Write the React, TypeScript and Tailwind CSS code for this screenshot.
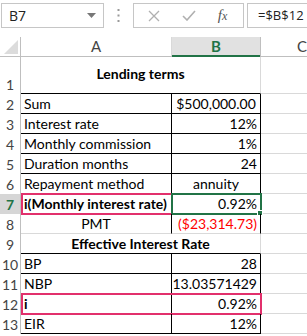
import React from "react";

const GRID = "border-[#d9d9d9]";

type Row = {
  n: number;
  a?: React.ReactNode;
  b?: React.ReactNode;
  kind: "title" | "boxed" | "pmt" | "active";
  h?: string;
  pink?: boolean;
  aBold?: boolean;
  bAlign?: "right" | "center";
  bRed?: boolean;
};

const rows: Row[] = [
  { n: 1, a: "Lending terms", kind: "title", h: "h-[37px]" },
  { n: 2, a: "Sum", b: "$500,000.00", kind: "boxed", bAlign: "center" },
  { n: 3, a: "Interest rate", b: "12%", kind: "boxed" },
  { n: 4, a: "Monthly commission", b: "1%", kind: "boxed" },
  { n: 5, a: "Duration months", b: "24", kind: "boxed" },
  { n: 6, a: "Repayment method", b: "annuity", kind: "boxed", bAlign: "center" },
  { n: 7, a: "i(Monthly interest rate)", b: "0.92%", kind: "active", aBold: true, pink: true },
  { n: 8, a: "PMT", b: "($23,314.73)", kind: "pmt", bRed: true },
  { n: 9, a: "Effective Interest Rate", kind: "title" },
  { n: 10, a: "BP", b: "28", kind: "boxed" },
  { n: 11, a: "NBP", b: "13.03571429", kind: "boxed" },
  { n: 12, a: "i", b: "0.92%", kind: "boxed", aBold: true, pink: true },
  { n: 13, a: "EIR", b: "12%", kind: "boxed" },
];

function SheetRow({ r }: { r: Row }) {
  const h = r.h ?? "h-[20px]";
  const active = r.n === 7;
  return (
    <div className={`flex ${h}`}>
      <div
        className={`w-[21px] shrink-0 border-r border-[#bfbfbf] flex items-end justify-center pb-[1px] text-[14px] leading-[17px] ${
          active ? "bg-[#d6d6d6] text-[#217346] font-bold" : "text-[#444] bg-white"
        }`}
      >
        {r.n}
      </div>
      <div className="relative flex w-[240px] shrink-0">
        {r.kind === "title" ? (
          <div
            className={`w-[240px] border-r ${GRID} border-b ${
              r.n === 1 ? "border-b-black items-center pb-[3px]" : "border-b-black items-end pb-[1px]"
            } flex justify-center font-bold text-[14px] leading-[17px] text-black`}
          >
            {r.a}
          </div>
        ) : (
          <>
            <div
              className={`w-[151px] border-r border-b flex items-end pb-[1px] text-[14px] leading-[17px] text-black whitespace-nowrap ${
                r.kind === "pmt"
                  ? `border-r-black ${GRID} justify-center`
                  : "border-black pl-[3px]"
              } ${r.aBold ? "font-bold" : ""}`}
            >
              {r.a}
            </div>
            <div
              className={`w-[89px] border-r border-b flex items-end pb-[1px] text-[14px] leading-[17px] whitespace-nowrap ${
                r.kind === "pmt" ? `border-r-black ${GRID}` : "border-black"
              } ${
                r.bAlign === "center" ? "justify-center" : "justify-end pr-[3px]"
              } ${r.bRed ? "text-[#ff0000]" : "text-black"}`}
            >
              {r.b}
            </div>
          </>
        )}
        {r.pink && (
          <div className="pointer-events-none absolute left-0 -right-[1px] -top-[1px] -bottom-[1px] border-2 border-[#e2306c]" />
        )}
        {active && (
          <div className="pointer-events-none absolute left-[150px] -right-[1px] -top-[1px] -bottom-[1px] border-2 border-[#217346]">
            <div className="absolute -right-[3px] -bottom-[3px] w-[6px] h-[6px] bg-[#217346] border border-white" />
          </div>
        )}
      </div>
      <div className={`flex-1 border-b ${GRID}`} />
    </div>
  );
}

export default function App() {
  return (
    <div className="w-[307px] h-[336px] overflow-hidden bg-white font-['Lato',sans-serif]">
      {/* Formula bar */}
      <div className="h-[37px] flex items-start pt-[3px] font-['Open_Sans',sans-serif]">
        <div className="ml-[1px] w-[103px] h-[25px] shrink-0 border border-[#c6c6c6] flex items-center justify-between pl-[7px] pr-[7px]">
          <span className="text-[14px] text-[#222]">B7</span>
          <svg width="9" height="5" viewBox="0 0 9 5">
            <path d="M0 0 H9 L4.5 5 Z" fill="#777" />
          </svg>
        </div>
        <div className="w-[29px] h-[25px] shrink-0 flex items-center justify-center">
          <svg width="3" height="13" viewBox="0 0 3 13">
            <rect x="0.5" y="0" width="2" height="2" fill="#9a9a9a" />
            <rect x="0.5" y="5.5" width="2" height="2" fill="#9a9a9a" />
            <rect x="0.5" y="11" width="2" height="2" fill="#9a9a9a" />
          </svg>
        </div>
        <div className="w-[111px] h-[25px] shrink-0 border border-[#c6c6c6] flex items-center">
          <div className="w-[36px] flex justify-center ml-[2px]">
            <svg width="12" height="12" viewBox="0 0 12 12">
              <path d="M1 1 L11 11 M11 1 L1 11" stroke="#b0b0b0" strokeWidth="1.3" />
            </svg>
          </div>
          <div className="w-[34px] flex justify-center">
            <svg width="14" height="11" viewBox="0 0 14 11">
              <path d="M1 6 L5 10 L13 1" stroke="#b0b0b0" strokeWidth="1.6" fill="none" />
            </svg>
          </div>
          <div className="flex-1 flex justify-center pr-[4px]">
            <span className="font-['Liberation_Serif',serif] italic text-[15px] text-[#555] leading-none">
              f<span className="text-[12px]">x</span>
            </span>
          </div>
        </div>
        <div className="ml-[3px] flex-1 h-[25px] border border-r-0 border-[#c6c6c6] flex items-center pl-[10px]">
          <span className="text-[13px] text-[#222]">=$B$12</span>
        </div>
      </div>

      {/* Column headers */}
      <div className="flex h-[20px] border-b border-[#bfbfbf] text-[15px] text-[#444]">
        <div className="w-[21px] shrink-0 border-r border-[#bfbfbf] relative">
          <svg className="absolute left-[4px] bottom-[2px]" width="14" height="14" viewBox="0 0 14 14">
            <path d="M14 0 L14 14 L0 14 Z" fill="#dcdcdc" />
          </svg>
        </div>
        <div className="w-[151px] shrink-0 border-r border-[#d9d9d9] flex items-center justify-center">A</div>
        <div className="w-[89px] shrink-0 border-r border-[#bfbfbf] bg-[#e1e1e1] flex items-center justify-center font-bold text-[#217346] relative">
          B
          <div className="absolute left-0 right-0 -bottom-[1px] h-[2px] bg-[#217346]" />
        </div>
        <div className="flex-1 flex items-center pl-[36px]">C</div>
      </div>

      {rows.map((r) => (
        <SheetRow key={r.n} r={r} />
      ))}
    </div>
  );
}
